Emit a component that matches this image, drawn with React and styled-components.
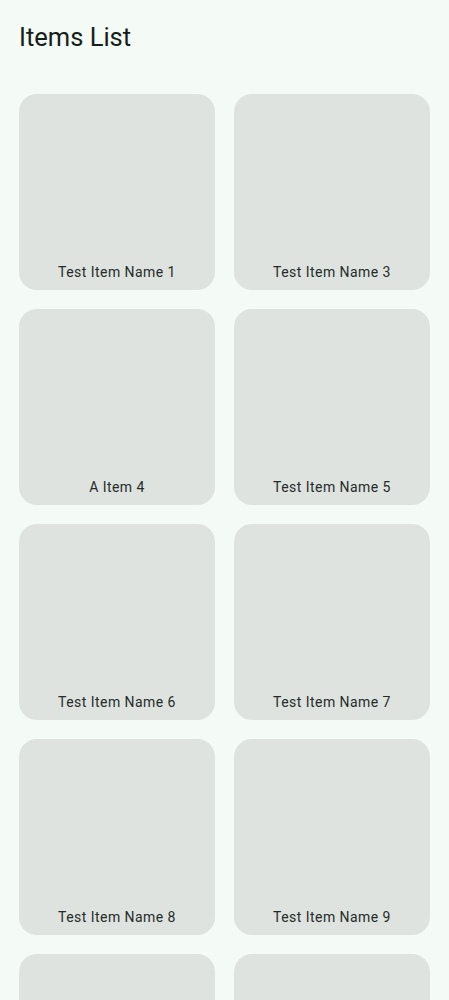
import React from 'react';
import styled, { createGlobalStyle } from 'styled-components';

const items = [
  'Test Item Name 1',
  'Test Item Name 3',
  'A Item 4',
  'Test Item Name 5',
  'Test Item Name 6',
  'Test Item Name 7',
  'Test Item Name 8',
  'Test Item Name 9',
  '',
  '',
];

export default function App() {
  return (
    <>
      <GlobalStyle />
      <Page>
        <Title>Items List</Title>
        <Grid>
          {items.map((name, i) => (
            <Card key={i}>
              <Label>{name}</Label>
            </Card>
          ))}
        </Grid>
      </Page>
    </>
  );
}

const GlobalStyle = createGlobalStyle`
  html, body {
    margin: 0;
    background: #f4faf6;
    font-family: Roboto, "Liberation Sans", sans-serif;
    overflow: hidden;
  }
`;

const Page = styled.div`
  min-height: 100vh;
  background: #f4faf6;
  padding: 21px 19px 0;
  box-sizing: border-box;
`;

const Title = styled.h1`
  margin: 0;
  font-size: 25.5px;
  line-height: 32px;
  font-weight: 400;
  color: #171d1a;
`;

const Grid = styled.div`
  display: grid;
  grid-template-columns: 196px 196px;
  gap: 19px;
  margin-top: 41px;
`;

const Card = styled.div`
  height: 196px;
  border-radius: 18px;
  background: #dee3e0;
  display: flex;
  flex-direction: column;
  justify-content: flex-end;
  align-items: center;
  padding-bottom: 8px;
  box-sizing: border-box;
`;

const Label = styled.span`
  font-size: 14px;
  line-height: 20px;
  letter-spacing: 0.45px;
  color: #262b28;
  min-height: 20px;
`;
